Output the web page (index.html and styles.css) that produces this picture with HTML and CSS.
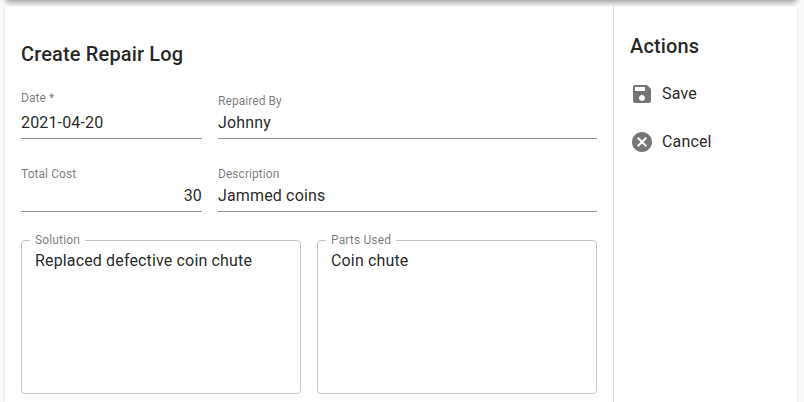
FILE: index.html
```html
<!DOCTYPE html>
<html lang="en">
<head>
    <meta charset="UTF-8">
    <meta name="viewport" content="width=device-width, initial-scale=1.0">
    <title>Create Repair Log</title>
    <link rel="stylesheet" href="styles.css">
</head>
<body>
    <header class="toolbar"></header>

    <div class="card">
        <main class="content">
            <h1 class="title">Create Repair Log</h1>

            <div class="row">
                <div class="field field-small">
                    <label class="label label-date" for="date">Date *</label>
                    <input class="input" id="date" type="text" value="2021-04-20">
                </div>
                <div class="field">
                    <label class="label" for="repairedBy">Repaired By</label>
                    <input class="input" id="repairedBy" type="text" value="Johnny">
                </div>
            </div>

            <div class="row">
                <div class="field field-small">
                    <label class="label" for="totalCost">Total Cost</label>
                    <input class="input input-number" id="totalCost" type="text" value="30">
                </div>
                <div class="field">
                    <label class="label" for="description">Description</label>
                    <input class="input" id="description" type="text" value="Jammed coins">
                </div>
            </div>

            <div class="row row-notes">
                <fieldset class="outlined">
                    <legend class="legend">Solution</legend>
                    <textarea class="textarea" aria-label="Solution">Replaced defective coin chute</textarea>
                </fieldset>
                <fieldset class="outlined">
                    <legend class="legend">Parts Used</legend>
                    <textarea class="textarea" aria-label="Parts Used">Coin chute</textarea>
                </fieldset>
            </div>
        </main>

        <aside class="actions">
            <h2 class="title">Actions</h2>
            <ul class="action-list">
                <li class="action">
                    <svg class="icon" viewBox="0 0 24 24"><path d="M17 3H5c-1.11 0-2 .9-2 2v14c0 1.1.89 2 2 2h14c1.1 0 2-.9 2-2V7l-4-4zm-5 16c-1.66 0-3-1.34-3-3s1.34-3 3-3 3 1.34 3 3-1.34 3-3 3zm3-10H5V5h10v4z"/></svg>
                    <span class="action-text">Save</span>
                </li>
                <li class="action">
                    <svg class="icon" viewBox="0 0 24 24"><path d="M12 2C6.47 2 2 6.47 2 12s4.47 10 10 10 10-4.47 10-10S17.53 2 12 2zm5 13.59L15.59 17 12 13.41 8.41 17 7 15.59 10.59 12 7 8.41 8.41 7 12 10.59 15.59 7 17 8.41 13.41 12 17 15.59z"/></svg>
                    <span class="action-text">Cancel</span>
                </li>
            </ul>
        </aside>
    </div>
</body>
</html>
```

FILE: styles.css
```css
* {
    margin: 0;
    padding: 0;
    box-sizing: border-box;
}

body {
    background-color: #fafafa;
    color: rgba(0, 0, 0, 0.87);
    font-family: Roboto, sans-serif;
    font-size: 16px;
    letter-spacing: 0.00938em;
    height: 402px;
    padding: 0 7px 0 5px;
    overflow: hidden;
}

.toolbar {
    height: 64px;
    margin-top: -64px;
    border-radius: 4px;
    box-shadow: 0 2px 4px -1px rgba(0, 0, 0, 0.2), 0 4px 5px 0 rgba(0, 0, 0, 0.14), 0 1px 10px 0 rgba(0, 0, 0, 0.12);
}

.card {
    position: relative;
    display: flex;
    height: 396px;
    margin-top: 6px;
    background-color: #fff;
    border-radius: 4px 4px 0 0;
    box-shadow: 0 2px 1px -1px rgba(0, 0, 0, 0.2), 0 1px 1px 0 rgba(0, 0, 0, 0.14), 0 1px 3px 0 rgba(0, 0, 0, 0.12);
}

.content {
    width: 608px;
    padding: 32px 16px 0;
}

.title {
    font-size: 20px;
    font-weight: 500;
    line-height: 32px;
    letter-spacing: 0.0075em;
}

.row {
    display: flex;
    align-items: flex-end;
    gap: 16px;
    height: 69px;
}

.row + .row {
    margin-top: 4px;
}

.field {
    display: flex;
    flex-direction: column;
    flex: 1;
    min-width: 0;
}

.field-small {
    flex: 0 0 181px;
}

.label {
    color: rgba(0, 0, 0, 0.54);
    font-size: 12px;
    line-height: 12px;
    letter-spacing: 0.06px;
    margin-bottom: 4px;
}

.label-date {
    margin-bottom: 7px;
}

.input {
    width: 100%;
    height: 28px;
    padding-bottom: 5px;
    border: none;
    border-bottom: 1px solid #8f8f8f;
    outline: none;
    background: none;
    color: inherit;
    font: inherit;
    letter-spacing: inherit;
}

.input-number {
    text-align: right;
}

.row.row-notes {
    height: 160px;
    margin-top: 22px;
    align-items: stretch;
}

.outlined {
    flex: 1;
    min-width: 0;
    padding: 0 8px;
    border: 1px solid #c4c4c4;
    border-radius: 4px;
}

.legend {
    padding: 0 5px;
    color: rgba(0, 0, 0, 0.54);
    font-size: 12px;
    line-height: 12px;
}

.textarea {
    display: block;
    width: 100%;
    height: 130px;
    padding: 5px;
    border: none;
    outline: none;
    resize: none;
    background: none;
    color: inherit;
    font: inherit;
    line-height: 19px;
    letter-spacing: inherit;
}

.actions {
    flex: 1;
    padding: 24px 16px 0;
    border-left: 1px solid #e0e0e0;
}

.action-list {
    list-style: none;
    margin-top: 8px;
}

.action {
    display: flex;
    align-items: center;
    gap: 8px;
    height: 48px;
}

.action-text {
    padding-bottom: 2px;
}

.icon {
    width: 24px;
    height: 24px;
    fill: rgba(0, 0, 0, 0.54);
}
```
